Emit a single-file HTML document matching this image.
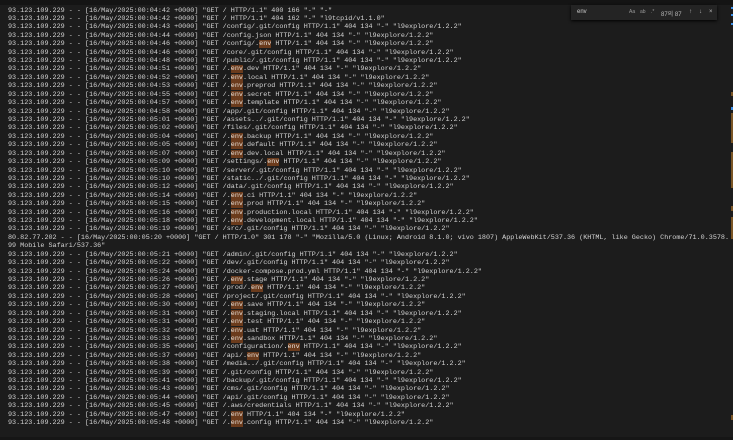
<!DOCTYPE html>
<html><head><meta charset="utf-8"><style>
html,body{margin:0;padding:0;}
body{width:733px;height:440px;overflow:hidden;background:#1c1c1c;position:relative;font-family:"Liberation Mono",monospace;}
.top{position:absolute;left:0;top:0;width:733px;height:5px;background:#141414;}
.bot{position:absolute;left:0;top:437px;width:733px;height:3px;background:#161616;}
pre{position:absolute;left:8px;top:6.5px;margin:0;font-family:"Liberation Mono",monospace;font-size:6.75px;line-height:8.42px;color:#d4d4d4;white-space:pre;}
.h{background:#6b3b1c;color:#e8e0d8;}
.sw{position:absolute;left:571px;top:5px;width:146px;height:15px;background:#242424;box-shadow:0 1px 3px #000;font-family:"Liberation Sans","Noto Sans CJK KR",sans-serif;font-size:6px;color:#bbb;}
.sw span{position:absolute;top:4px;}
.sb{position:absolute;left:731px;width:2px;}
</style></head><body>
<div class="top"></div>
<pre>93.123.109.229 - - [16/May/2025:00:04:42 +0000] "GET / HTTP/1.1" 400 166 "-" "-"
93.123.109.229 - - [16/May/2025:00:04:42 +0000] "GET / HTTP/1.1" 404 162 "-" "l9tcpid/v1.1.0"
93.123.109.229 - - [16/May/2025:00:04:43 +0000] "GET /config/.git/config HTTP/1.1" 404 134 "-" "l9explore/1.2.2"
93.123.109.229 - - [16/May/2025:00:04:44 +0000] "GET /config.json HTTP/1.1" 404 134 "-" "l9explore/1.2.2"
93.123.109.229 - - [16/May/2025:00:04:46 +0000] "GET /config/.<span class="h">env</span> HTTP/1.1" 404 134 "-" "l9explore/1.2.2"
93.123.109.229 - - [16/May/2025:00:04:46 +0000] "GET /core/.git/config HTTP/1.1" 404 134 "-" "l9explore/1.2.2"
93.123.109.229 - - [16/May/2025:00:04:48 +0000] "GET /public/.git/config HTTP/1.1" 404 134 "-" "l9explore/1.2.2"
93.123.109.229 - - [16/May/2025:00:04:51 +0000] "GET /.<span class="h">env</span>.dev HTTP/1.1" 404 134 "-" "l9explore/1.2.2"
93.123.109.229 - - [16/May/2025:00:04:52 +0000] "GET /.<span class="h">env</span>.local HTTP/1.1" 404 134 "-" "l9explore/1.2.2"
93.123.109.229 - - [16/May/2025:00:04:53 +0000] "GET /.<span class="h">env</span>.preprod HTTP/1.1" 404 134 "-" "l9explore/1.2.2"
93.123.109.229 - - [16/May/2025:00:04:55 +0000] "GET /.<span class="h">env</span>.secret HTTP/1.1" 404 134 "-" "l9explore/1.2.2"
93.123.109.229 - - [16/May/2025:00:04:57 +0000] "GET /.<span class="h">env</span>.template HTTP/1.1" 404 134 "-" "l9explore/1.2.2"
93.123.109.229 - - [16/May/2025:00:04:58 +0000] "GET /app/.git/config HTTP/1.1" 404 134 "-" "l9explore/1.2.2"
93.123.109.229 - - [16/May/2025:00:05:01 +0000] "GET /assets../.git/config HTTP/1.1" 404 134 "-" "l9explore/1.2.2"
93.123.109.229 - - [16/May/2025:00:05:02 +0000] "GET /files/.git/config HTTP/1.1" 404 134 "-" "l9explore/1.2.2"
93.123.109.229 - - [16/May/2025:00:05:04 +0000] "GET /.<span class="h">env</span>.backup HTTP/1.1" 404 134 "-" "l9explore/1.2.2"
93.123.109.229 - - [16/May/2025:00:05:05 +0000] "GET /.<span class="h">env</span>.default HTTP/1.1" 404 134 "-" "l9explore/1.2.2"
93.123.109.229 - - [16/May/2025:00:05:07 +0000] "GET /.<span class="h">env</span>.dev.local HTTP/1.1" 404 134 "-" "l9explore/1.2.2"
93.123.109.229 - - [16/May/2025:00:05:09 +0000] "GET /settings/.<span class="h">env</span> HTTP/1.1" 404 134 "-" "l9explore/1.2.2"
93.123.109.229 - - [16/May/2025:00:05:10 +0000] "GET /server/.git/config HTTP/1.1" 404 134 "-" "l9explore/1.2.2"
93.123.109.229 - - [16/May/2025:00:05:10 +0000] "GET /static../.git/config HTTP/1.1" 404 134 "-" "l9explore/1.2.2"
93.123.109.229 - - [16/May/2025:00:05:12 +0000] "GET /data/.git/config HTTP/1.1" 404 134 "-" "l9explore/1.2.2"
93.123.109.229 - - [16/May/2025:00:05:14 +0000] "GET /.<span class="h">env</span>.ci HTTP/1.1" 404 134 "-" "l9explore/1.2.2"
93.123.109.229 - - [16/May/2025:00:05:15 +0000] "GET /.<span class="h">env</span>.prod HTTP/1.1" 404 134 "-" "l9explore/1.2.2"
93.123.109.229 - - [16/May/2025:00:05:16 +0000] "GET /.<span class="h">env</span>.production.local HTTP/1.1" 404 134 "-" "l9explore/1.2.2"
93.123.109.229 - - [16/May/2025:00:05:18 +0000] "GET /.<span class="h">env</span>.development.local HTTP/1.1" 404 134 "-" "l9explore/1.2.2"
93.123.109.229 - - [16/May/2025:00:05:19 +0000] "GET /src/.git/config HTTP/1.1" 404 134 "-" "l9explore/1.2.2"
80.82.77.202 - - [16/May/2025:00:05:20 +0000] "GET / HTTP/1.0" 301 178 "-" "Mozilla/5.0 (Linux; Android 8.1.0; vivo 1807) AppleWebKit/537.36 (KHTML, like Gecko) Chrome/71.0.3578.
99 Mobile Safari/537.36"
93.123.109.229 - - [16/May/2025:00:05:21 +0000] "GET /admin/.git/config HTTP/1.1" 404 134 "-" "l9explore/1.2.2"
93.123.109.229 - - [16/May/2025:00:05:22 +0000] "GET /dev/.git/config HTTP/1.1" 404 134 "-" "l9explore/1.2.2"
93.123.109.229 - - [16/May/2025:00:05:24 +0000] "GET /docker-compose.prod.yml HTTP/1.1" 404 134 "-" "l9explore/1.2.2"
93.123.109.229 - - [16/May/2025:00:05:26 +0000] "GET /.<span class="h">env</span>.stage HTTP/1.1" 404 134 "-" "l9explore/1.2.2"
93.123.109.229 - - [16/May/2025:00:05:27 +0000] "GET /prod/.<span class="h">env</span> HTTP/1.1" 404 134 "-" "l9explore/1.2.2"
93.123.109.229 - - [16/May/2025:00:05:28 +0000] "GET /project/.git/config HTTP/1.1" 404 134 "-" "l9explore/1.2.2"
93.123.109.229 - - [16/May/2025:00:05:30 +0000] "GET /.<span class="h">env</span>.save HTTP/1.1" 404 134 "-" "l9explore/1.2.2"
93.123.109.229 - - [16/May/2025:00:05:31 +0000] "GET /.<span class="h">env</span>.staging.local HTTP/1.1" 404 134 "-" "l9explore/1.2.2"
93.123.109.229 - - [16/May/2025:00:05:31 +0000] "GET /.<span class="h">env</span>.test HTTP/1.1" 404 134 "-" "l9explore/1.2.2"
93.123.109.229 - - [16/May/2025:00:05:32 +0000] "GET /.<span class="h">env</span>.uat HTTP/1.1" 404 134 "-" "l9explore/1.2.2"
93.123.109.229 - - [16/May/2025:00:05:33 +0000] "GET /.<span class="h">env</span>.sandbox HTTP/1.1" 404 134 "-" "l9explore/1.2.2"
93.123.109.229 - - [16/May/2025:00:05:35 +0000] "GET /configuration/.<span class="h">env</span> HTTP/1.1" 404 134 "-" "l9explore/1.2.2"
93.123.109.229 - - [16/May/2025:00:05:37 +0000] "GET /api/.<span class="h">env</span> HTTP/1.1" 404 134 "-" "l9explore/1.2.2"
93.123.109.229 - - [16/May/2025:00:05:38 +0000] "GET /media../.git/config HTTP/1.1" 404 134 "-" "l9explore/1.2.2"
93.123.109.229 - - [16/May/2025:00:05:39 +0000] "GET /.git/config HTTP/1.1" 404 134 "-" "l9explore/1.2.2"
93.123.109.229 - - [16/May/2025:00:05:41 +0000] "GET /backup/.git/config HTTP/1.1" 404 134 "-" "l9explore/1.2.2"
93.123.109.229 - - [16/May/2025:00:05:43 +0000] "GET /cms/.git/config HTTP/1.1" 404 134 "-" "l9explore/1.2.2"
93.123.109.229 - - [16/May/2025:00:05:44 +0000] "GET /api/.git/config HTTP/1.1" 404 134 "-" "l9explore/1.2.2"
93.123.109.229 - - [16/May/2025:00:05:45 +0000] "GET /.aws/credentials HTTP/1.1" 404 134 "-" "l9explore/1.2.2"
93.123.109.229 - - [16/May/2025:00:05:47 +0000] "GET /.<span class="h">env</span> HTTP/1.1" 404 134 "-" "l9explore/1.2.2"
93.123.109.229 - - [16/May/2025:00:05:48 +0000] "GET /.<span class="h">env</span>.config HTTP/1.1" 404 134 "-" "l9explore/1.2.2"</pre>
<div class="sw">
<span style="left:6px;color:#ccc">env</span>
<span style="left:58px;color:#999;font-size:5px">Aa</span>
<span style="left:69px;color:#999;font-size:5px">ab</span>
<span style="left:80px;color:#999;font-size:5px">.*</span>
<span style="left:90px;color:#bbb">87의 87</span>
<span style="left:118px;color:#bbb">↑</span>
<span style="left:128px;color:#bbb">↓</span>
<span style="left:138px;color:#bbb">×</span>
</div>
<div class="sb" style="top:7px;height:2px;background:#3a8ee6"></div>
<div class="sb" style="top:14px;height:2px;background:#3a8ee6"></div>
<div class="sb" style="top:23px;height:2px;background:#3a8ee6"></div>
<div class="sb" style="top:92px;height:4px;background:#7a5525"></div>
<div class="sb" style="top:107px;height:3px;background:#3a8ee6"></div>
<div class="sb" style="top:113px;height:30px;background:#7a5525"></div>
<div class="sb" style="top:152px;height:36px;background:#7a5525"></div>
<div class="sb" style="top:206px;height:5px;background:#7a5525"></div>
<div class="sb" style="top:217px;height:22px;background:#7a5525"></div>
<div class="sb" style="top:415px;height:5px;background:#7a5525"></div>
<div class="bot"></div>
</body></html>
